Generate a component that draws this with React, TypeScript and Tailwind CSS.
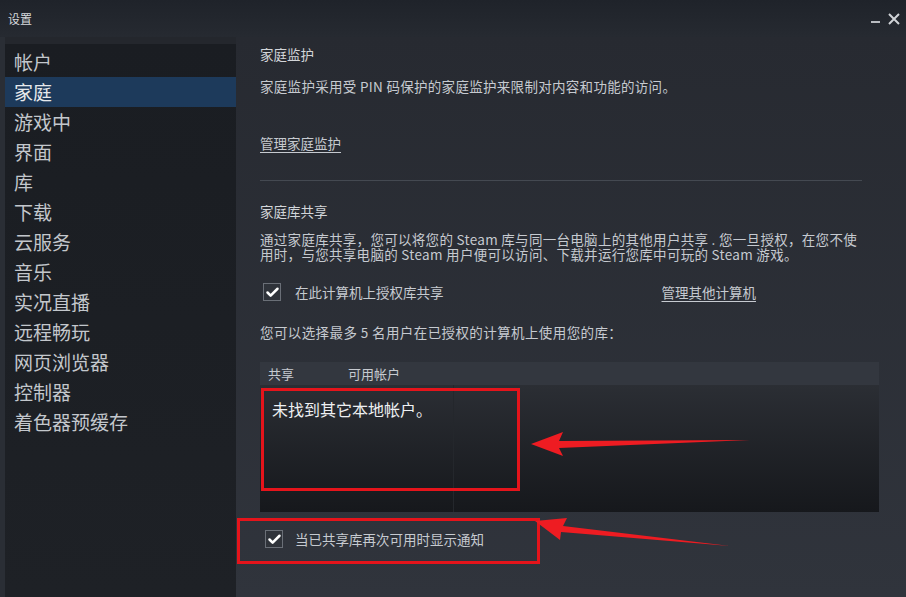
import { Check } from 'lucide-react';

const font = { fontFamily: '"Noto Sans CJK SC", "Noto Sans", sans-serif' };

const navItems = [
  '帐户',
  '家庭',
  '游戏中',
  '界面',
  '库',
  '下载',
  '云服务',
  '音乐',
  '实况直播',
  '远程畅玩',
  '网页浏览器',
  '控制器',
  '着色器预缓存',
];

function CheckBox() {
  return (
    <span className="flex h-[18px] w-[18px] shrink-0 items-center justify-center border border-[#6a6f77] bg-[#2f333a]">
      <Check className="h-[15px] w-[15px] text-white" strokeWidth={4} />
    </span>
  );
}

export default function App() {
  return (
    <div
      className="relative flex h-[597px] w-full flex-col overflow-hidden bg-[#2a2e35] text-[#c6cad0]"
      style={font}
    >
      {/* title bar */}
      <div className="flex h-[37px] items-center justify-between bg-gradient-to-b from-[#1f232a] to-[#262a31] pl-2 pr-[6px]">
        <span className="text-[12px] text-[#d6d9dd]">设置</span>
        <div className="flex items-center gap-[8px] text-[#c9ccd1]">
          <span className="mt-[6px] h-[2px] w-[9px] bg-[#b9bcc1]" />
          <svg width="12" height="12" viewBox="0 0 12 12">
            <path d="M1 1L11 11M11 1L1 11" stroke="#d0d3d7" strokeWidth="2" />
          </svg>
        </div>
      </div>

      <div className="flex flex-1">
        {/* sidebar */}
        <nav className="ml-[5px] flex w-[231px] flex-col border-t-[7px] border-[#24272d] bg-gradient-to-b from-[#1a1d22] to-[#1e2126] pt-[3px]">
          {navItems.map((item) => (
            <div
              key={item}
              className={
                'flex h-[30px] items-center pl-[9px] text-[19px] ' +
                (item === '家庭' ? 'bg-[#1d3a5b] text-[#e6e9ec]' : 'text-[#c3c7cc]')
              }
            >
              {item}
            </div>
          ))}
        </nav>

        {/* content */}
        <main className="flex flex-1 flex-col bg-gradient-to-b from-[#272a31] to-[#30343c] pl-[24px] pr-[27px] text-[13.5px] leading-[18px]">
          <p className="mt-[8px] text-[#d2d5d9]">家庭监护</p>
          <p className="mt-[14px] tracking-[0.3px]">
            家庭监护采用受 PIN 码保护的家庭监护来限制对内容和功能的访问。
          </p>
          <p className="mt-[39px]">
            <span className="underline underline-offset-[3px]">管理家庭监护</span>
          </p>
          <div className="mt-[28px] mr-[17px] h-px bg-[#444951]" />

          <p className="mt-[21px] text-[#d2d5d9]">家庭库共享</p>
          <div className="mt-[12px] flex flex-col tracking-[0.3px]">
            <span className="h-[15px] leading-[15px]">
              通过家庭库共享，您可以将您的 Steam 库与同一台电脑上的其他用户共享 . 您一旦授权，在您不使
            </span>
            <span className="h-[15px] leading-[15px]">
              用时，与您共享电脑的 Steam 用户便可以访问、下载并运行您库中可玩的 Steam 游戏。
            </span>
          </div>

          <div className="mt-[21px] flex h-[18px] items-center">
            <span className="ml-[3px]">
              <CheckBox />
            </span>
            <span className="ml-[14px]">在此计算机上授权库共享</span>
            <span className="ml-[218px] underline underline-offset-[3px]">管理其他计算机</span>
          </div>

          <p className="mt-[22px] tracking-[0.4px]">您可以选择最多 5 名用户在已授权的计算机上使用您的库：</p>

          {/* table */}
          <div className="mt-[21px] flex flex-col">
            <div className="flex h-[23px] items-center bg-[#33373f] text-[13px]">
              <span className="w-[88px] pl-[8px]">共享</span>
              <span>可用帐户</span>
            </div>
            <div className="flex h-[127px] bg-gradient-to-b from-[#2b2e34] to-[#16181c]">
              <div className="w-[194px] border-r border-[#24272c] pl-[12px] pt-[15px] text-[16px] text-[#eef0f2]">
                未找到其它本地帐户。
              </div>
              <div className="flex-1" />
            </div>
          </div>

          <div className="mt-[18px] flex h-[18px] items-center">
            <span className="ml-[5px]">
              <CheckBox />
            </span>
            <span className="ml-[12px]">当已共享库再次可用时显示通知</span>
          </div>
        </main>
      </div>

      {/* annotation overlay */}
      <div className="pointer-events-none absolute left-[261px] top-[388px] h-[103px] w-[259px] border-[3px] border-[#e5141b]" />
      <div className="pointer-events-none absolute left-[237px] top-[518px] h-[46px] w-[303px] border-[3px] border-[#e5141b]" />
      <svg className="pointer-events-none absolute inset-0" width="906" height="597" viewBox="0 0 906 597">
        <polygon points="531,444 563,432 559,441 750,440 559,448 563,456" fill="#ee1c22" />
        <polygon points="535,521 567,518 563,526 730,546 561,532 560,540" fill="#ee1c22" />
      </svg>
    </div>
  );
}
